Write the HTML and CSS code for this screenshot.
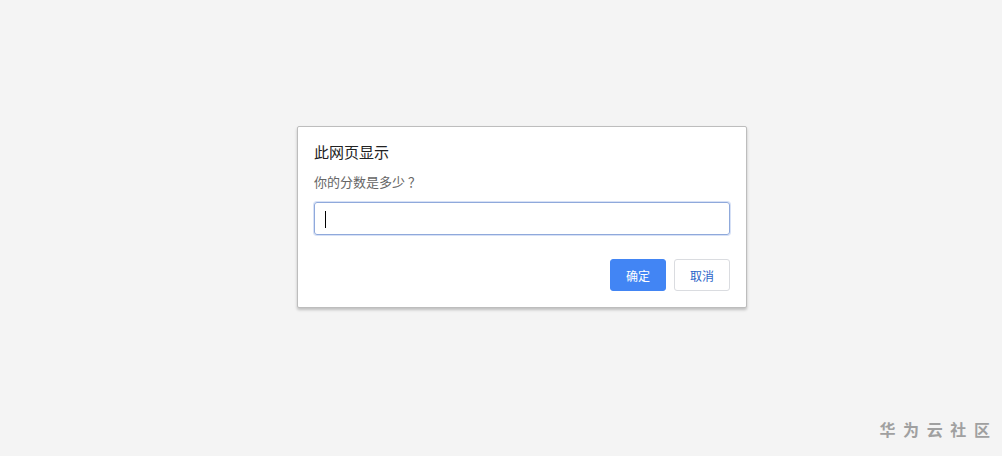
FILE: index.html
```html
<!DOCTYPE html>
<html lang="zh-CN">
<head>
  <meta charset="UTF-8" />
  <title>此网页显示</title>
  <link rel="stylesheet" href="styles.css">
</head>
<body>

  <div class="dialog">
    <div class="dialog-title">此网页显示</div>
    <div class="dialog-message">你的分数是多少 ？</div>
    <div class="dialog-input"><span class="caret"></span></div>
    <div class="dialog-buttons">
      <button class="btn btn-ok">确定</button>
      <button class="btn btn-cancel">取消</button>
    </div>
  </div>

  <div class="watermark">华 为 云 社 区</div>

</body>
</html>
```

FILE: styles.css
```css
body {
  font-family: "Noto Sans CJK SC", "Noto Sans", sans-serif;
  background-color: #f4f4f4;
  margin: 0;
  padding: 126px 0 0 297px;
  height: 456px;
  box-sizing: border-box;
  overflow: hidden;
}
.dialog {
  width: 450px;
  box-sizing: border-box;
  background: white;
  border: 1px solid #bdbdbd;
  border-radius: 2px;
  box-shadow: 0 2px 3px rgba(0,0,0,0.22);
  padding: 15px 16px 16px 16px;
}
.dialog-title {
  font-size: 15px;
  line-height: 20px;
  color: #222;
}
.dialog-message {
  font-size: 13px;
  line-height: 18px;
  color: #666;
  margin-top: 11px;
}
.dialog-input {
  margin-top: 11px;
  height: 33px;
  box-sizing: border-box;
  border: 1px solid #8fa9db;
  border-radius: 3px;
  box-shadow: 0 0 0 1px rgba(140,170,230,0.35);
  padding: 8px 10px;
}
.caret {
  display: block;
  width: 1px;
  height: 17px;
  background: #000;
}
.dialog-buttons {
  display: flex;
  justify-content: flex-end;
  gap: 8px;
  margin-top: 24px;
}
.btn {
  width: 56px;
  height: 32px;
  font-family: inherit;
  font-size: 12px;
  border-radius: 3px;
  padding: 0;
}
.btn-ok {
  background-color: #4285f4;
  border: 1px solid #4285f4;
  color: white;
}
.btn-cancel {
  background-color: white;
  border: 1px solid #dadce0;
  color: #2a64c8;
}
.watermark {
  position: absolute;
  right: 10px;
  bottom: 15px;
  font-size: 16px;
  font-weight: bold;
  color: #a0a0a0;
  letter-spacing: 2px;
}
```
